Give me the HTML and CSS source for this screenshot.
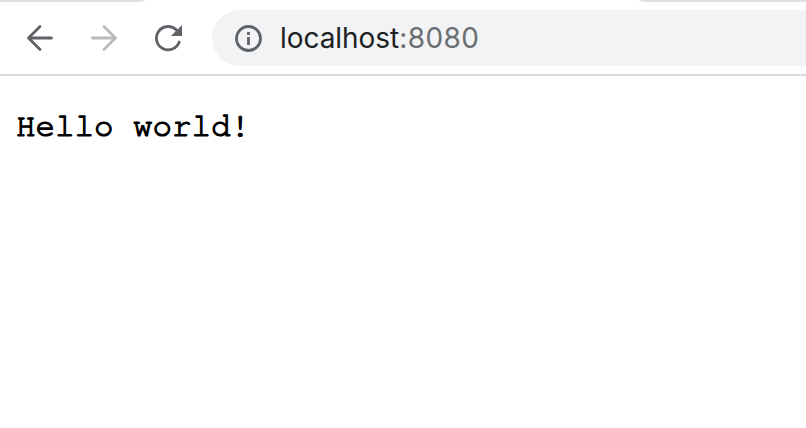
FILE: index.html
```html
<!DOCTYPE html>
<html lang="en">
<head>
<meta charset="utf-8">
<title>localhost:8080</title>
<link rel="stylesheet" href="styles.css">
</head>
<body>
<div class="tabs"><div class="tab-left"></div><div class="tab-right"></div></div>
<header class="toolbar">
  <svg class="icon back" viewBox="0 0 28 28"><path d="M14 2.500 2.500 14 14 25.500M3 14H25.500"/></svg>
  <svg class="icon forward" viewBox="0 0 28 28"><path d="M14 2.500 25.500 14 14 25.500M25 14H2.500"/></svg>
  <svg class="icon reload" viewBox="0 0 28 28"><path d="M25.200 18A11.700 11.700 0 1 1 22.500 6"/><path class="solid" d="M28 1V12H17Z"/></svg>
  <div class="address">
    <svg class="info" viewBox="0 0 28 28"><circle cx="14.500" cy="14.500" r="12"/><path d="M14.500 13V21M14.500 8V11"/></svg>
    <span class="url">localhost<span class="port">:8080</span></span>
  </div>
</header>
<main><pre class="message">Hello world!</pre></main>
</body>
</html>
```
FILE: styles.css
```css
body { margin: 0; height: 428px; overflow: hidden; background: #fff; }
.tabs { display: flex; justify-content: space-between; height: 2px; }
.tab-left { width: 145px; background: #dfdfe5; border-bottom-right-radius: 8px 2px; }
.tab-right { width: 167px; background: #dfdfe5; border-bottom-left-radius: 8px 2px; }
.toolbar { display: flex; height: 74px; box-sizing: border-box; padding: 8px 0 8px 26px; border-bottom: 2px solid #dadadf; }
.icon { width: 28px; height: 28px; margin: 13.500px 36px 0 0; flex: none; fill: none; stroke: #5f6368; stroke-width: 2.800; stroke-linecap: round; stroke-linejoin: round; }
.forward { stroke: #b9babc; }
.reload { margin-right: 30px; }
.solid { fill: #5f6368; stroke: none; }
.address { display: flex; flex: 1; height: 56px; background: #f1f3f4; border-radius: 28px 0 0 28px; align-items: center; padding-left: 22px; }
.info { width: 28px; height: 28px; flex: none; fill: none; stroke: #5f6368; stroke-width: 2.800; }
.url { margin-left: 18px; font: 28px/56px Inter, sans-serif; letter-spacing: -0.050px; color: #202124; white-space: nowrap; }
.port { color: #6b6e70; letter-spacing: 0.400px; }
.message { margin: 32px 16px; font: 32.500px/38px "Nimbus Mono PS", "FreeMono", "Courier Prime", "Liberation Mono", monospace; color: #000; -webkit-text-stroke: 1.200px #000; }
```
